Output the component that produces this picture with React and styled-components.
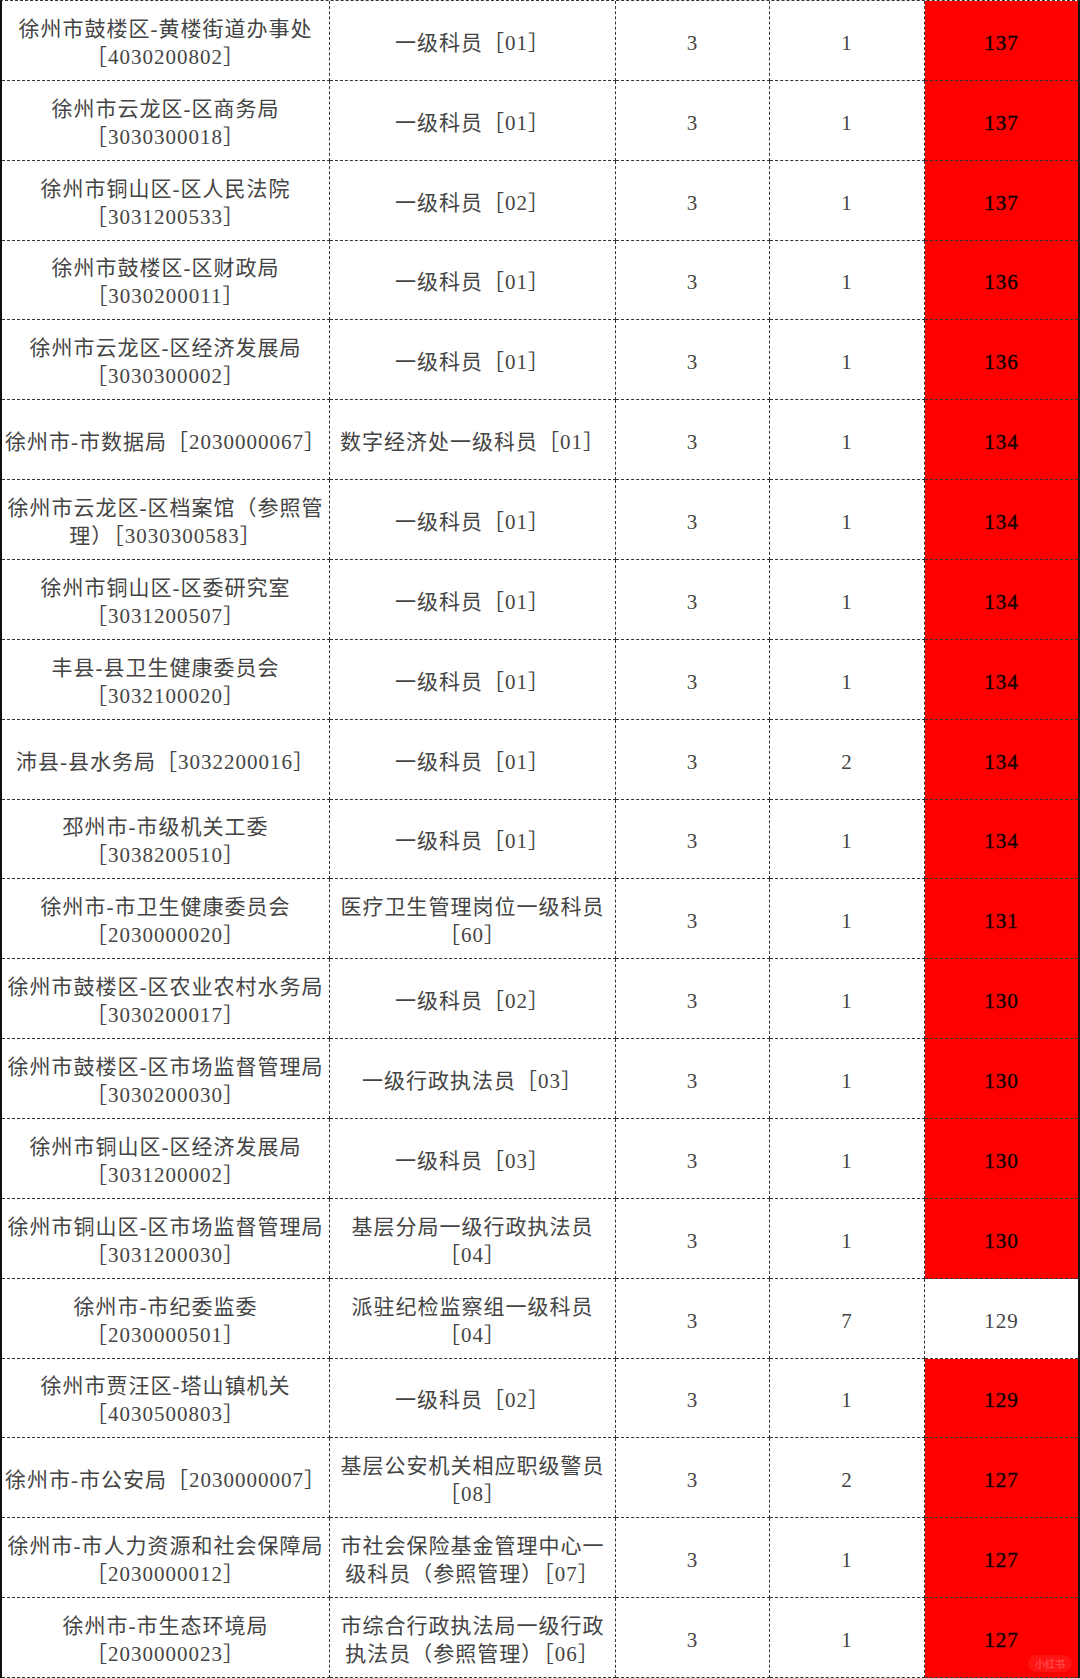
import React from 'react';
import styled, { createGlobalStyle } from 'styled-components';

const GlobalStyle = createGlobalStyle`
  html, body {
    margin: 0;
    padding: 0;
    background: #fff;
  }
  * {
    box-sizing: border-box;
  }
`;

const rows = [
  { unit: ['徐州市鼓楼区-黄楼街道办事处', '［4030200802］'], post: ['一级科员［01］'], a: 3, b: 1, score: 137, hot: true },
  { unit: ['徐州市云龙区-区商务局', '［3030300018］'], post: ['一级科员［01］'], a: 3, b: 1, score: 137, hot: true },
  { unit: ['徐州市铜山区-区人民法院', '［3031200533］'], post: ['一级科员［02］'], a: 3, b: 1, score: 137, hot: true },
  { unit: ['徐州市鼓楼区-区财政局', '［3030200011］'], post: ['一级科员［01］'], a: 3, b: 1, score: 136, hot: true },
  { unit: ['徐州市云龙区-区经济发展局', '［3030300002］'], post: ['一级科员［01］'], a: 3, b: 1, score: 136, hot: true },
  { unit: ['徐州市-市数据局［2030000067］'], post: ['数字经济处一级科员［01］'], a: 3, b: 1, score: 134, hot: true },
  { unit: ['徐州市云龙区-区档案馆（参照管', '理）［3030300583］'], post: ['一级科员［01］'], a: 3, b: 1, score: 134, hot: true },
  { unit: ['徐州市铜山区-区委研究室', '［3031200507］'], post: ['一级科员［01］'], a: 3, b: 1, score: 134, hot: true },
  { unit: ['丰县-县卫生健康委员会', '［3032100020］'], post: ['一级科员［01］'], a: 3, b: 1, score: 134, hot: true },
  { unit: ['沛县-县水务局［3032200016］'], post: ['一级科员［01］'], a: 3, b: 2, score: 134, hot: true },
  { unit: ['邳州市-市级机关工委', '［3038200510］'], post: ['一级科员［01］'], a: 3, b: 1, score: 134, hot: true },
  { unit: ['徐州市-市卫生健康委员会', '［2030000020］'], post: ['医疗卫生管理岗位一级科员', '［60］'], a: 3, b: 1, score: 131, hot: true },
  { unit: ['徐州市鼓楼区-区农业农村水务局', '［3030200017］'], post: ['一级科员［02］'], a: 3, b: 1, score: 130, hot: true },
  { unit: ['徐州市鼓楼区-区市场监督管理局', '［3030200030］'], post: ['一级行政执法员［03］'], a: 3, b: 1, score: 130, hot: true },
  { unit: ['徐州市铜山区-区经济发展局', '［3031200002］'], post: ['一级科员［03］'], a: 3, b: 1, score: 130, hot: true },
  { unit: ['徐州市铜山区-区市场监督管理局', '［3031200030］'], post: ['基层分局一级行政执法员', '［04］'], a: 3, b: 1, score: 130, hot: true },
  { unit: ['徐州市-市纪委监委', '［2030000501］'], post: ['派驻纪检监察组一级科员', '［04］'], a: 3, b: 7, score: 129, hot: false },
  { unit: ['徐州市贾汪区-塔山镇机关', '［4030500803］'], post: ['一级科员［02］'], a: 3, b: 1, score: 129, hot: true },
  { unit: ['徐州市-市公安局［2030000007］'], post: ['基层公安机关相应职级警员', '［08］'], a: 3, b: 2, score: 127, hot: true },
  { unit: ['徐州市-市人力资源和社会保障局', '［2030000012］'], post: ['市社会保险基金管理中心一', '级科员（参照管理）［07］'], a: 3, b: 1, score: 127, hot: true },
  { unit: ['徐州市-市生态环境局', '［2030000023］'], post: ['市综合行政执法局一级行政', '执法员（参照管理）［06］'], a: 3, b: 1, score: 127, hot: true },
];

const App = () => (
  <>
    <GlobalStyle />
    <Page>
      <Sheet>
        {rows.map((row, i) => (
          <React.Fragment key={i}>
            <Cell>
              {row.unit.map((line) => (
                <Line key={line}>{line}</Line>
              ))}
            </Cell>
            <Cell>
              {row.post.map((line) => (
                <Line key={line}>{line}</Line>
              ))}
            </Cell>
            <Cell>{row.a}</Cell>
            <Cell>{row.b}</Cell>
            <Cell $hot={row.hot} $last>
              {row.score}
            </Cell>
          </React.Fragment>
        ))}
      </Sheet>
      <Watermark>小红书</Watermark>
    </Page>
  </>
);

const Page = styled.div`
  position: relative;
  width: 1080px;
  height: 1678px;
  overflow: hidden;
  background: #fff;
`;

const Sheet = styled.div`
  display: grid;
  grid-template-columns: 328px 286px 154px 155px 1fr;
  grid-template-rows: repeat(21, 1fr);
  width: 1080px;
  height: 1678px;
  border-left: 2px solid #111;
  border-right: 2px solid #111;
  border-top: 1px dashed #333;
  font-family: 'Liberation Serif', 'Noto Sans CJK SC', serif;
  font-size: 21px;
  letter-spacing: 1px;
  color: #444;
`;

const Cell = styled.div`
  display: flex;
  flex-direction: column;
  align-items: center;
  justify-content: center;
  padding-top: 5px;
  text-align: center;
  border-bottom: 1px dashed #333;
  border-right: ${(p) => (p.$last ? 'none' : '1px dashed #333')};
  background: ${(p) => (p.$hot ? '#ff0000' : '#fff')};
  color: ${(p) => (p.$hot ? '#120000' : 'inherit')};
  -webkit-text-stroke: ${(p) => (p.$hot ? '0.4px #120000' : '0')};
  line-height: 28px;
  overflow: hidden;
`;

const Line = styled.span`
  white-space: nowrap;
`;

const Watermark = styled.div`
  position: absolute;
  right: 8px;
  bottom: 6px;
  padding: 1px 7px;
  border-radius: 10px;
  background: rgba(255, 255, 255, 0.08);
  color: rgba(255, 255, 255, 0.22);
  font-family: 'Noto Sans CJK SC', sans-serif;
  font-size: 10px;
  font-weight: 700;
`;

export default App;
